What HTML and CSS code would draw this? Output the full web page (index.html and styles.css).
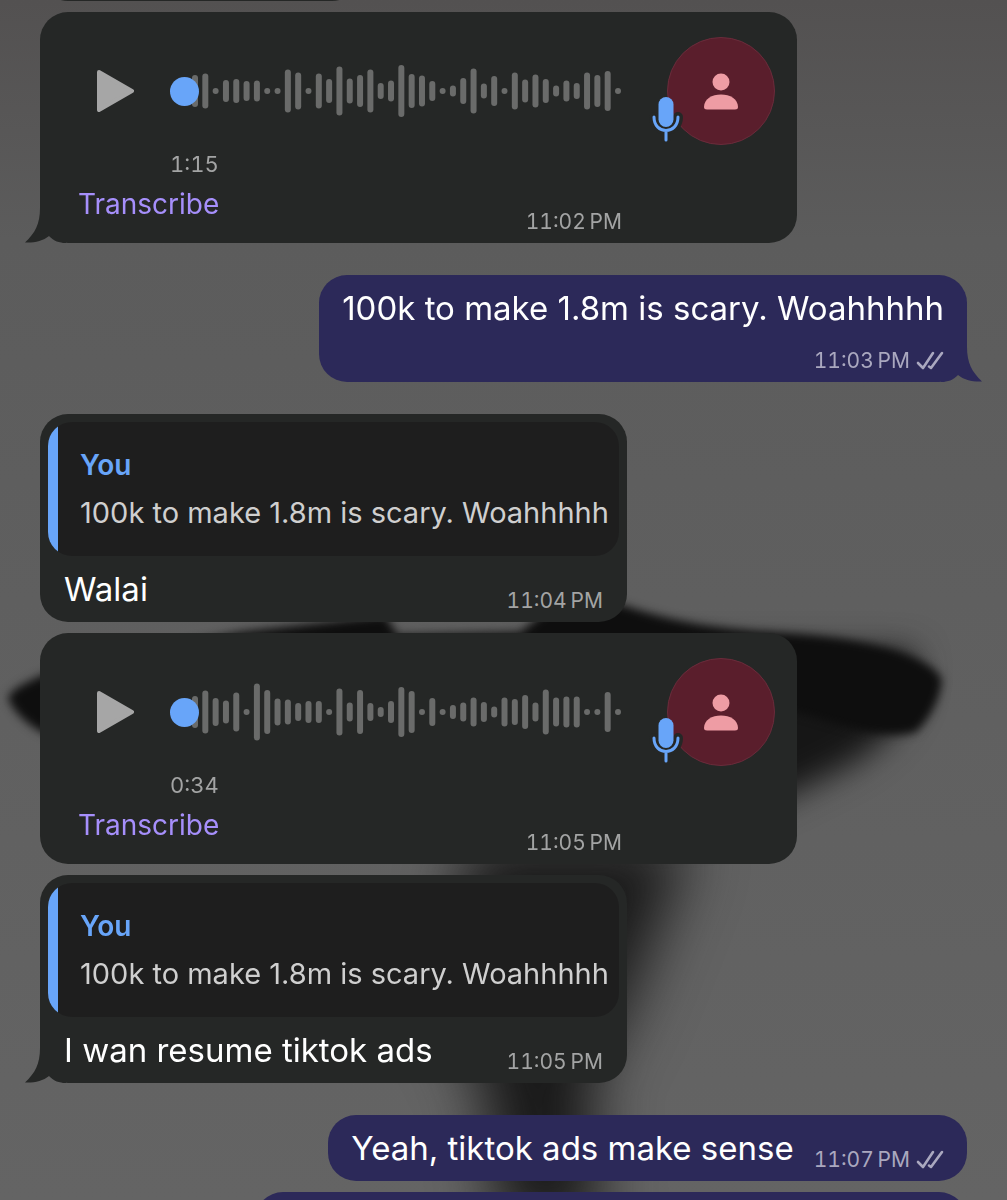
FILE: index.html
```
<!DOCTYPE html>
<html lang="en">
<head>
<meta charset="utf-8">
<meta name="viewport" content="width=device-width, initial-scale=1">
<title>Chat</title>
<link rel="stylesheet" href="styles.css">
</head>
<body>
<svg class="symbols" aria-hidden="true">
  <symbol id="tail" viewBox="0 0 41 53"><path d="M15 0V18C15 34 10 43 0 52.500C9 53 18 51 24 46C29 51 34 53 41 53V0Z"/></symbol>
  <symbol id="play" viewBox="0 0 37 42"><path d="M2 2L35 21L2 40Z" stroke-width="4" stroke-linejoin="round"/></symbol>
  <symbol id="ticks" viewBox="0 0 28 20"><path d="M2 12L7 17L17 2M13 15.500L15 17L26 2" fill="none" stroke-width="2.600" stroke-linecap="round" stroke-linejoin="round"/></symbol>
  <symbol id="person" viewBox="0 0 34 37"><circle cx="17" cy="9" r="8.500"/><path d="M0 34C0 26 8 21.500 17 21.500S34 26 34 34Q34 36.500 31 36.500H3Q0 36.500 0 34Z"/></symbol>
  <symbol id="mic" viewBox="0 0 36 52"><path class="mic-halo" d="M18 12V25M6 24C6 41 30 41 30 24M18 37V46"/><rect x="10.500" y="4" width="15" height="30" rx="7.500"/><path class="mic-line" d="M6 24C6 42 30 42 30 24M18 38V47"/></symbol>
</svg>

<svg class="wallpaper" viewBox="0 0 1007 1200" preserveAspectRatio="none" aria-hidden="true">
  <defs>
    <linearGradient id="base" x1="0" y1="0" x2="0" y2="1"><stop offset="0" stop-color="#535151"/><stop offset=".2" stop-color="#5c5c5c"/><stop offset="1" stop-color="#646464"/></linearGradient>
    <filter id="soft5" x="-30%" y="-30%" width="160%" height="160%" color-interpolation-filters="sRGB"><feGaussianBlur stdDeviation="5"/></filter>
    <filter id="soft18" x="-50%" y="-50%" width="200%" height="200%" color-interpolation-filters="sRGB"><feGaussianBlur stdDeviation="16"/></filter>
    <filter id="soft30" x="-80%" y="-50%" width="260%" height="200%" color-interpolation-filters="sRGB"><feGaussianBlur stdDeviation="30"/></filter>
  </defs>
  <rect width="1007" height="1200" fill="url(#base)"/>
  <path d="M470 840H690L660 920L625 1010L590 1080L600 1230H500L485 1090L440 1000Z" fill="#181818" filter="url(#soft30)"/>
  <path d="M620 650H912C926 690 900 735 850 765L780 800L700 830H620Z" fill="#161616" filter="url(#soft18)"/>
  <path d="M8 698C12 688 30 680 60 668L240 632L385 615L398 635L520 632L560 600L620 604C690 628 740 630 797 634C880 640 936 660 942 680C940 698 932 716 916 732C885 740 850 728 797 712L60 716V738C36 734 14 714 8 698Z" fill="#0e0e0e" filter="url(#soft5)"/>
</svg>

<main class="chat">
  <article class="bubble in earlier"></article>

  <article class="bubble in voice last">
    <svg class="tail" aria-hidden="true"><use href="#tail"/></svg>
    <button class="play" type="button" aria-label="Play"><svg aria-hidden="true"><use href="#play"/></svg></button>
    <div class="wave" data-levels="32 35 6 22 24 20 21 6 6 43 37 6 35 24 49 25 32 43 16 21 52 34 31 20 6 11 26 45 15 30 6 37 23 33 24 11 21 16 37 32 40 6">
      <svg viewBox="0 0 452 60" aria-hidden="true"></svg>
      <input type="range" min="0" max="75" value="0" aria-label="Playback position">
    </div>
    <div class="avatar"><svg class="person" aria-hidden="true"><use href="#person"/></svg><svg class="mic" aria-hidden="true"><use href="#mic"/></svg></div>
    <span class="duration">1:15</span>
    <div class="foot"><button class="transcribe" type="button">Transcribe</button><time class="meta">11:02&#8239;PM</time></div>
  </article>

  <article class="bubble out stacked last">
    <svg class="tail" aria-hidden="true"><use href="#tail"/></svg>
    <p class="text">100k to make 1.8m is scary. Woahhhhh</p>
    <span class="meta"><time>11:03&#8239;PM</time><svg class="ticks" role="img" aria-label="Delivered"><use href="#ticks"/></svg></span>
  </article>

  <article class="bubble in reply">
    <blockquote class="quote"><strong>You</strong><p>100k to make 1.8m is scary. Woahhhhh</p></blockquote>
    <div class="line"><p class="text">Walai</p><time class="meta">11:04&#8239;PM</time></div>
  </article>

  <article class="bubble in voice">
    <button class="play" type="button" aria-label="Play"><svg aria-hidden="true"><use href="#play"/></svg></button>
    <div class="wave" data-levels="32 43 28 23 39 6 57 44 27 25 18 22 22 6 47 19 44 18 10 22 50 42 6 28 6 14 19 29 20 11 29 26 34 19 45 29 31 31 6 6 40 6">
      <svg viewBox="0 0 452 60" aria-hidden="true"></svg>
      <input type="range" min="0" max="34" value="0" aria-label="Playback position">
    </div>
    <div class="avatar"><svg class="person" aria-hidden="true"><use href="#person"/></svg><svg class="mic" aria-hidden="true"><use href="#mic"/></svg></div>
    <span class="duration">0:34</span>
    <div class="foot"><button class="transcribe" type="button">Transcribe</button><time class="meta">11:05&#8239;PM</time></div>
  </article>

  <article class="bubble in reply last">
    <svg class="tail" aria-hidden="true"><use href="#tail"/></svg>
    <blockquote class="quote"><strong>You</strong><p>100k to make 1.8m is scary. Woahhhhh</p></blockquote>
    <div class="line"><p class="text">I wan resume tiktok ads</p><time class="meta">11:05&#8239;PM</time></div>
  </article>

  <article class="bubble out line">
    <p class="text">Yeah, tiktok ads make sense</p>
    <span class="meta"><time>11:07&#8239;PM</time><svg class="ticks" role="img" aria-label="Delivered"><use href="#ticks"/></svg></span>
  </article>

  <article class="bubble out later"></article>
</main>
<script src="wave.js"></script>
</body>
</html>
```
FILE: wave.js
```
// Draws one rounded bar per audio level, evenly spread over the track.
document.querySelectorAll('.wave').forEach(function (wave) {
  var levels = wave.dataset.levels.split(' ').map(Number);
  var svg = wave.querySelector('svg');
  var first = 25, last = 448, step = (last - first) / (levels.length - 1);
  levels.forEach(function (level, i) {
    var bar = document.createElementNS('http://www.w3.org/2000/svg', 'rect');
    bar.setAttribute('x', first + i * step - 3);
    bar.setAttribute('y', 30 - level / 2);
    bar.setAttribute('width', 6);
    bar.setAttribute('height', level);
    bar.setAttribute('rx', 3);
    svg.appendChild(bar);
  });
});
```
FILE: styles.css
```
* { box-sizing: border-box; }

body {
  margin: 0;
  background: #5e5e5e;
  color: #fff;
  font-family: Inter, "Liberation Sans", sans-serif;
}

p, blockquote { margin: 0; }

button {
  padding: 0;
  border: 0;
  background: none;
  font: inherit;
  cursor: pointer;
}

.symbols { position: absolute; width: 0; height: 0; }

.wallpaper {
  position: fixed;
  inset: 0;
  z-index: -1;
  width: 100%;
  height: 100%;
}

.chat {
  display: flex;
  flex-direction: column;
  gap: 11px;
  height: 100vh;
  padding: 0 40px;
  overflow: hidden;
}

.bubble {
  position: relative;
  z-index: 0;
  flex: none;
  max-width: 100%;
  min-height: 66px;
  border-radius: 28px;
}

.in { align-self: flex-start; background: #252726; fill: #252726; }
.out { align-self: flex-end; background: #2c2959; fill: #2c2959; }
.last { margin-bottom: 21px; }
.earlier { width: 320px; margin-top: -65px; }
.later { width: 712px; }

.tail {
  position: absolute;
  z-index: -1;
  bottom: 0;
  left: -15px;
  width: 41px;
  height: 53px;
}
.out .tail { right: -15px; left: auto; transform: scaleX(-1); }

.text { font-size: 33px; line-height: 40px; }

.meta {
  display: flex;
  align-items: center;
  gap: 6px;
  color: #a3a4a4;
  font-size: 21px;
  line-height: 28px;
  font-variant-numeric: tabular-nums;
  white-space: nowrap;
}
.out .meta { color: #aaa8bf; }
.ticks { width: 28px; height: 20px; stroke: #aaa8bf; }

.stacked {
  display: flex;
  flex-direction: column;
  gap: 19px;
  padding: 13px 23px 7px;
}
.stacked .meta { align-self: flex-end; }

.line {
  display: flex;
  justify-content: space-between;
  gap: 20px;
  padding: 13px 23px 7px;
}
.line .meta { align-self: flex-end; margin-top: 18px; }

.reply { padding: 8px 8px 0; }
.reply .line { padding: 13px 16px 7px; }

.quote {
  padding: 27px 10px 27px 32px;
  border-radius: 24px;
  background: linear-gradient(to right, #68a5f9 10px, #1e1e1e 10px);
  color: #cfcfcf;
  font-size: 29px;
  line-height: 32px;
}
.quote strong {
  display: block;
  margin-bottom: 16px;
  color: #68a5f9;
  font-size: 28px;
  font-weight: 600;
}

.voice {
  display: grid;
  grid-template-columns: 92px minmax(0, 452px) 45px 108px;
  grid-template-rows: 108px 31px 60px;
  padding: 25px 22px 7px 38px;
}

.play {
  align-self: center;
  justify-self: start;
  margin-left: 19px;
}
.play svg { display: block; width: 37px; height: 42px; fill: #a6a6a6; stroke: #a6a6a6; }

.wave { position: relative; align-self: center; height: 60px; }
.wave svg { display: block; width: 100%; height: 60px; fill: #6a6b6a; }
.wave input {
  position: absolute;
  inset: 0;
  width: 100%;
  height: 100%;
  margin: 0;
  appearance: none;
  background: none;
}
.wave input::-webkit-slider-thumb {
  width: 29px;
  height: 29px;
  border-radius: 50%;
  background: #68a5f9;
  appearance: none;
}

.avatar {
  position: relative;
  display: grid;
  grid-column: 4;
  place-items: center;
  height: 108px;
  border: 1px solid #6a2c3b;
  border-radius: 50%;
  background: #5a1e2c;
}
.person { width: 34px; height: 37px; fill: #ee9ca4; }
.mic {
  position: absolute;
  bottom: -1px;
  left: -20px;
  width: 36px;
  height: 52px;
  fill: #68a5f9;
}
.mic-line { fill: none; stroke: #68a5f9; stroke-width: 3; stroke-linecap: round; }
.mic-halo { fill: none; stroke: #252726; stroke-width: 10; stroke-linecap: round; }

.duration {
  grid-column: 2;
  align-self: end;
  color: #a3a4a4;
  font-size: 22px;
  line-height: 24px;
  font-variant-numeric: tabular-nums;
}

.foot {
  display: flex;
  grid-column: 1 / 3;
  justify-content: space-between;
  padding-top: 12px;
}
.foot .meta { align-self: flex-end; }
.transcribe {
  align-self: flex-start;
  color: #a68ffb;
  font-size: 28px;
  line-height: 32px;
}
```
